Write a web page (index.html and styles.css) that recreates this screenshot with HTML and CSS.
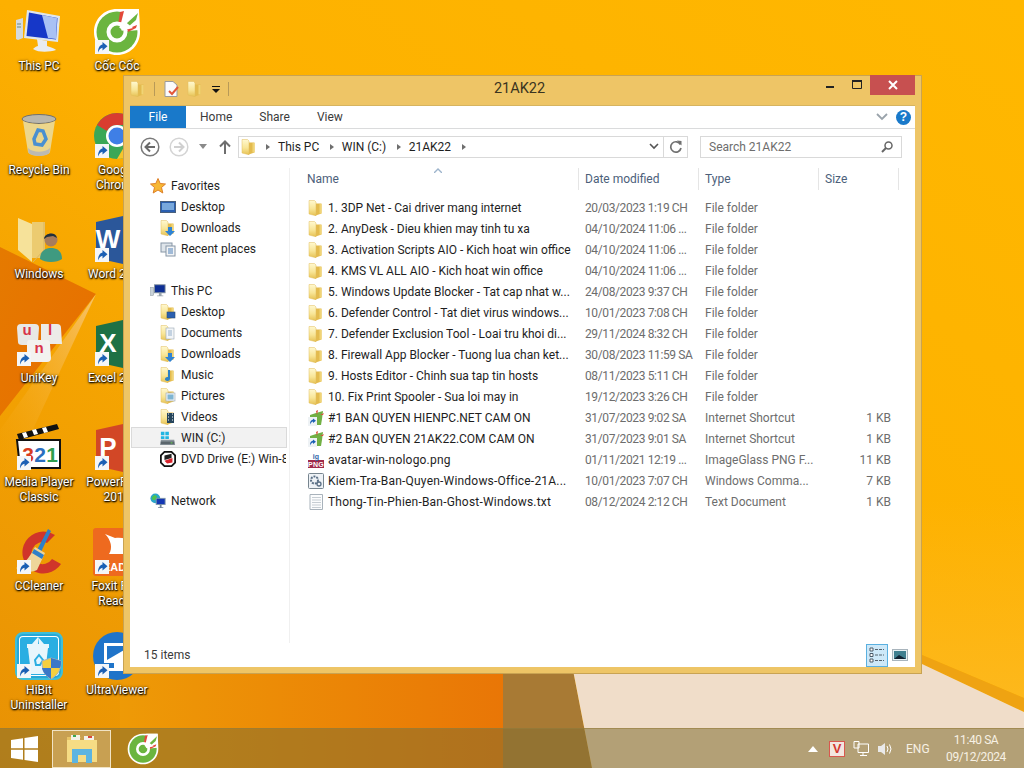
FILE: index.html
```html
<!DOCTYPE html>
<html lang="en">
<head>
<meta charset="utf-8">
<title>21AK22</title>
<link rel="stylesheet" href="styles.css">
</head>
<body>
<svg class="defs" width="0" height="0" aria-hidden="true">
  <defs>
    <linearGradient id="fg" x1="0" y1="0" x2="0" y2="1"><stop offset="0" stop-color="#fff8cf"/><stop offset=".55" stop-color="#f8e596"/><stop offset="1" stop-color="#e6c152"/></linearGradient>
    <symbol id="folder" viewBox="0 0 16 16">
      <path d="M7 3.500H13.500V13.500L7 15.800Z" fill="#e3bb4e"/>
      <path d="M1 .5H6.500L8 2V15.800L1 14Z" fill="url(#fg)" stroke="#e0bd5c" stroke-width=".5"/>
      <path d="M11.500 4H13.500V13.500H11.500Z" fill="#f0d476"/>
    </symbol>
    <symbol id="arrow" viewBox="0 0 14 14">
      <rect width="14" height="14" fill="#f4f6f8"/>
      <path d="M3 12.500C3 7.500 5 5 7.500 4.500V2L12.500 6.200L7.500 10.500V7.800C5.800 8 4.200 9.500 3 12.500Z" fill="#1a5fb4"/>
    </symbol>
    <symbol id="coccoc" viewBox="0 0 48 48">
      <path d="M24 1C11 1 1 11 1 24S11 47 24 47S47 37 47 24C47 15 46 6 46 1Z" fill="#fff"/>
      <circle cx="24" cy="24" r="20.500" fill="#6bb53f"/>
      <path d="M24 24L29 1H46V22Z" fill="#fff"/>
      <path d="M27 4L31 3L28 15L25.500 14Z" fill="#e2483a"/>
      <path d="M33 16L45 5L43 12L35 19Z" fill="#6bb53f"/>
      <path d="M34 21L44 17L43 20L35 24Z" fill="#e2483a"/>
      <circle cx="24" cy="24" r="8.500" fill="#6bb53f" stroke="#fff" stroke-width="4"/>
      <path d="M24 24L30 12L40 20Z" fill="#fff"/>
      <circle cx="24" cy="24" r="5" fill="#6bb53f"/>
    </symbol>
    <symbol id="pc" viewBox="0 0 48 48">
      <path d="M1 12L8 10V30L3 32L1 31Z" fill="#d4dadd"/>
      <path d="M2 16H6M2 19H6" stroke="#6e8a7c"/>
      <path d="M12 2L45 8L43 34L9 30Z" fill="#dfe6ee"/>
      <path d="M14 4.500L42.500 10L41 31.500L11.500 28Z" fill="#1637c8"/>
      <path d="M27 7L42 10L41 31L33 30Z" fill="#a9c1f4"/>
      <path d="M22 31L32 33V38C36 39 40 41 41 42C35 44 24 45 18 41C20 39 22 38 23 38Z" fill="#e9ecef"/>
    </symbol>
    <symbol id="bin" viewBox="0 0 48 48">
      <ellipse cx="24" cy="7" rx="17" ry="4.500" fill="#b9b7ae" stroke="#70706c"/>
      <path d="M8 9L13 40C16 45 32 45 35 40L40 9C32 13 16 13 8 9Z" fill="#ecd68c"/>
      <path d="M13 36C18 41 30 41 35 36L34.500 41C31 45 17 45 13.500 41Z" fill="#bcbab2"/>
      <path d="M19 27L23 18L28 19L31 27L27 33L20 32Z" fill="none" stroke="#4a90d0" stroke-width="3.500"/>
    </symbol>
    <symbol id="chrome" viewBox="0 0 48 48">
      <circle cx="24" cy="24" r="23" fill="#3aa757"/>
      <path d="M24 1A23 23 0 0 1 44 13H24A11 11 0 0 0 14 19L4 13A23 23 0 0 1 24 1Z" fill="#d93c30"/>
      <path d="M44 13A23 23 0 0 1 24 47L34 30A11 11 0 0 0 34 19Z" fill="#f7c52b"/>
      <circle cx="24" cy="24" r="11" fill="#fff"/>
      <circle cx="24" cy="24" r="8.500" fill="#3f7fe6"/>
    </symbol>
    <symbol id="userfolder" viewBox="0 0 48 48">
      <path d="M3 2L17 8L17 46L3 34Z" fill="#f6e29a"/>
      <path d="M17 6H30V42H17Z" fill="#eccb70"/>
      <path d="M29 6V34L18 46" fill="none" stroke="#d9b560"/>
      <circle cx="36" cy="24" r="6.500" fill="#a87c5c"/>
      <path d="M29 23C29 17 41 15 42 22L38 20L32 21Z" fill="#24303a"/>
      <path d="M25 43C25 34 32 32 36 32C42 32 47 35 47 43C42 47 30 47 25 43Z" fill="#3f9a80"/>
    </symbol>
    <symbol id="word" viewBox="0 0 48 48">
      <path d="M3 6L30 0V48L3 42Z" fill="#2b579a"/>
      <text x="15" y="32" class="svgbig" text-anchor="middle">W</text>
    </symbol>
    <symbol id="excel" viewBox="0 0 48 48">
      <path d="M3 6L30 0V48L3 42Z" fill="#1e7145"/>
      <text x="15" y="32" class="svgbig" text-anchor="middle">X</text>
    </symbol>
    <symbol id="ppt" viewBox="0 0 48 48">
      <path d="M3 6L30 0V48L3 42Z" fill="#d24726"/>
      <text x="15" y="32" class="svgbig" text-anchor="middle">P</text>
    </symbol>
    <symbol id="unikey" viewBox="0 0 48 48">
      <path d="M2 8Q2 4 6 4H20Q24 4 24 8L23 22Q23 25 19 25H7Q3 25 3 22Z" fill="#e8e8e6"/>
      <path d="M26 4H42Q46 4 46 8L47 24H26Z" fill="#ecebe8"/>
      <path d="M14 20H32Q35 20 35 24L36 38Q36 42 32 42H16Q12 42 12 38L12 24Q12 20 14 20Z" fill="#f3f2ef"/>
      <text x="12" y="15" class="svgkey" text-anchor="middle">u</text>
      <text x="35" y="15" class="svgkey" text-anchor="middle">l</text>
      <text x="24" y="33" class="svgkey" text-anchor="middle">n</text>
    </symbol>
    <symbol id="mpc" viewBox="0 0 48 48">
      <path d="M2 10L42 0L44 5L4 16Z" fill="#111"/>
      <path d="M7 9L11 8L13 13L9 14ZM17 6L21 5L23 10L19 11ZM27 4L31 3L33 8L29 9Z" fill="#fff"/>
      <path d="M2 16H45V44H5Z" fill="#fff" stroke="#111" stroke-width="2"/>
      <text x="13" y="38" class="svgnum3" text-anchor="middle">3</text>
      <text x="25" y="38" class="svgnum2" text-anchor="middle">2</text>
      <text x="37" y="38" class="svgnum1" text-anchor="middle">1</text>
    </symbol>
    <symbol id="ccleaner" viewBox="0 0 48 48">
      <path d="M40 7A21 21 0 1 0 46 36L37 31A11 11 0 1 1 32 15Z" fill="#d0352a"/>
      <path d="M33 1L36 3L26 24L22 22Z" fill="#2f7fc8"/>
      <path d="M20 19L30 25L22 42C16 45 6 44 1 40C9 37 14 30 20 19Z" fill="#eed59a"/>
      <path d="M19 21L29 27L27 31L17 25Z" fill="#2f7fc8"/>
    </symbol>
    <symbol id="foxit" viewBox="0 0 48 48">
      <rect width="48" height="48" rx="3" fill="#ee6a1f"/>
      <path d="M12 6L22 10C34 8 42 16 44 26H16C20 20 18 12 12 6Z" fill="#fff"/>
      <text x="2" y="43" class="svgfox">READER</text>
    </symbol>
    <symbol id="hibit" viewBox="0 0 48 48">
      <rect x="1" y="1" width="46" height="46" rx="7" fill="#26a7d8" stroke="#3fbfd8" stroke-width="2"/>
      <rect x="4" y="4" width="40" height="40" rx="4" fill="#fff"/>
      <rect x="5" y="5" width="38" height="38" rx="3" fill="#2aaee2"/>
      <path d="M13 16H33L30 42H16Z" fill="#e8f6fc"/>
      <path d="M12 12H34V16H12ZM17 12L23 5L24 12ZM29 12L23 5V12Z" fill="#e8f6fc"/>
      <path d="M20 28L24 23L28 28L25 33H21Z" fill="none" stroke="#2aaee2" stroke-width="2"/>
      <path d="M36 26L46 29C46 38 43 43 36 47C29 43 27 38 27 29Z" fill="#f4cf3e" stroke="#aab3bb"/>
      <path d="M36 26L46 29C46 32 46 34 45 36H36ZM36 36V47C30 43 28 40 27 36Z" fill="#3a78c8"/>
    </symbol>
    <symbol id="ultra" viewBox="0 0 48 48">
      <circle cx="24" cy="24" r="24" fill="#1f74c9"/>
      <path d="M11 11H41V31H11Z" fill="#fff"/>
      <path d="M14 14H38L14 28Z" fill="#1f74c9"/>
      <path d="M21 31H31V36H38V39H14V36H21Z" fill="#fff"/>
    </symbol>
    <symbol id="star" viewBox="0 0 16 16">
      <path d="M8 .500L10.200 5.500L15.500 6L11.500 9.500L12.800 15L8 12L3.200 15L4.500 9.500L.500 6L5.800 5.500Z" fill="#f7b733" stroke="#dd7f28"/>
    </symbol>
    <symbol id="desktopic" viewBox="0 0 16 16">
      <rect x=".5" y="2.500" width="15" height="11" fill="#2a5fb0" stroke="#49607d"/>
      <rect x="2" y="4" width="12" height="7" fill="#78a8dc"/>
    </symbol>
    <symbol id="downloads" viewBox="0 0 16 16">
      <use href="#folder"/>
      <path d="M8 7H12V11H15L10 16L5 11H8Z" fill="#2f83d4"/>
    </symbol>
    <symbol id="recent" viewBox="0 0 16 16">
      <rect x="1" y="2" width="11" height="9" fill="#dfe5ea" stroke="#8695a5"/>
      <rect x="6" y="5" width="9" height="10" fill="#f2f4f6" stroke="#8695a5"/>
      <path d="M8 8H13M8 10H13M8 12H13" stroke="#4f80b8"/>
    </symbol>
    <symbol id="thispc" viewBox="0 0 18 16">
      <rect x="0" y="4" width="4" height="9" fill="#c9d2d8" stroke="#7c8890" stroke-width=".5"/>
      <rect x="5" y="1" width="12" height="9" fill="#0e2f94" stroke="#85939e"/>
      <path d="M10 10H13V13H15V14H8V13H10Z" fill="#9aa5ad"/>
    </symbol>
    <symbol id="f-desktop" viewBox="0 0 16 16">
      <use href="#folder"/>
      <rect x="7" y="8" width="8" height="6" fill="#2a5fb0" stroke="#2d4d75" stroke-width=".6"/>
    </symbol>
    <symbol id="f-docs" viewBox="0 0 16 16">
      <use href="#folder"/>
      <rect x="6" y="3" width="8" height="11" fill="#f2f5f8" stroke="#9aa7b2" stroke-width=".6"/>
      <path d="M8 6H12M8 8H12M8 10H12" stroke="#6f93b8" stroke-width=".7"/>
    </symbol>
    <symbol id="f-music" viewBox="0 0 16 16">
      <use href="#folder"/>
      <path d="M10 3V12A2.500 2 0 1 1 8 10V3Z" fill="#2f83c4"/>
    </symbol>
    <symbol id="f-pics" viewBox="0 0 16 16">
      <use href="#folder"/>
      <rect x="6" y="5" width="9" height="8" fill="#eef3f6" stroke="#9aa7b2" stroke-width=".6"/>
      <rect x="7.500" y="6.500" width="6" height="5" fill="#7fb5d2"/>
    </symbol>
    <symbol id="f-videos" viewBox="0 0 16 16">
      <use href="#folder"/>
      <rect x="7" y="4" width="7" height="10" fill="#26455c"/>
      <path d="M8 5H9M8 8H9M8 11H9M12 5H13M12 8H13M12 11H13" stroke="#fff"/>
    </symbol>
    <symbol id="drive" viewBox="0 0 18 18">
      <path d="M1 2H5V6H1ZM6 2H10V6H6ZM1 7H5V10H1ZM6 7H10V10H6Z" fill="#21b5e2"/>
      <path d="M1 11H16L17 17H0Z" fill="#8b969d"/>
      <rect x="1" y="13" width="15" height="3" fill="#5b666d"/>
      <rect x="12" y="14" width="2" height="1" fill="#69e04b"/>
    </symbol>
    <symbol id="dvd" viewBox="0 0 18 18">
      <path d="M5 1H13L17 5V13L13 17H5L1 13V5Z" fill="#fff" stroke="#111" stroke-width="2"/>
      <path d="M5 5L13 3V8L5 10Z" fill="#222"/>
      <path d="M5 11L14 8V13L8 14Z" fill="#d7242d"/>
    </symbol>
    <symbol id="network" viewBox="0 0 18 18">
      <circle cx="6" cy="6" r="5.500" fill="#2aa6c8"/>
      <path d="M2 5L5 2L8 4L6 8L3 8Z" fill="#4ec34e"/>
      <rect x="7" y="6" width="10" height="7" fill="#1437b4" stroke="#7f95a8"/>
      <path d="M11 13H13V16H15V17H9V16H11Z" fill="#6f8498"/>
    </symbol>
    <symbol id="link" viewBox="0 0 16 16">
      <path d="M2 5L8 3L15 1L14 9L13 15H2Z" fill="#72b044"/>
      <path d="M8 1L10 0L9 5ZM12 5L16 3L15 5Z" fill="#df4b3a"/>
      <rect x="0" y="7" width="9" height="9" fill="#eef2f5"/>
      <path d="M2 14.500C2 11 3.500 10 5 9.800V8.500L8 10.800L5 13V11.600C3.800 11.800 2.800 12.800 2 14.500Z" fill="#1a5fb4"/>
    </symbol>
    <symbol id="png" viewBox="0 0 16 16">
      <rect x="0" y="8" width="16" height="8" fill="#a02a4a"/>
      <text x="8" y="6.500" class="svgig" text-anchor="middle">ig</text>
      <text x="8" y="15" class="svgpng" text-anchor="middle">PNG</text>
    </symbol>
    <symbol id="cmd" viewBox="0 0 16 16">
      <rect x=".5" y=".5" width="15" height="15" rx="1" fill="#eef2f6" stroke="#77858f"/>
      <circle cx="6.500" cy="7" r="3.500" fill="none" stroke="#5a6f85" stroke-width="2" stroke-dasharray="2 1"/>
      <circle cx="11" cy="11" r="2" fill="none" stroke="#5a6f85" stroke-width="1.300"/>
    </symbol>
    <symbol id="txt" viewBox="0 0 16 16">
      <path d="M2 .5H14.500V15.500H2Z" fill="#fbfcfd" stroke="#a8b2bb"/>
      <path d="M4 3.500H13M4 6H13M4 8.500H13M4 11H13M4 13.500H13" stroke="#c6cdd3"/>
    </symbol>
  </defs>
</svg>

<div class="screen">
  <svg class="wallpaper" viewBox="0 0 1024 768" aria-hidden="true">
    <defs>
      <linearGradient id="wb" x1="1" y1="0" x2="0" y2="1"><stop offset="0" stop-color="#ffb800"/><stop offset=".5" stop-color="#fdb000"/><stop offset="1" stop-color="#e89104"/></linearGradient>
      <linearGradient id="wo" x1="0" y1="0" x2="1" y2="0"><stop offset="0" stop-color="#ee9a06"/><stop offset="1" stop-color="#e97606"/></linearGradient>
      <linearGradient id="wd" x1="0" y1="0" x2="1" y2="1"><stop offset="0" stop-color="#e57a00"/><stop offset="1" stop-color="#e86e00"/></linearGradient>
      <linearGradient id="ws" x1="1" y1="0" x2="0" y2="1"><stop offset="0" stop-color="#f7c36c"/><stop offset="1" stop-color="#f5a200" stop-opacity="0"/></linearGradient>
      <linearGradient id="wy" x1="0" y1="0" x2="0" y2="1"><stop offset="0" stop-color="#fdb81c" stop-opacity="0"/><stop offset="1" stop-color="#fdb81c"/></linearGradient>
    </defs>
    <rect width="1024" height="768" fill="url(#wb)"/>
    <path d="M0 247L96 294L0 416Z" fill="url(#wd)"/>
    <path d="M96 294L0 430V500Z" fill="url(#ws)"/>
    <rect x="120" y="670" width="384" height="98" fill="url(#wo)"/>
    <path d="M503 670H573L592 768H503Z" fill="#a87a34"/>
    <path d="M922 500H1024V698L922 655Z" fill="url(#wy)"/>
    <path d="M922 655L1024 698V712L922 664Z" fill="#efa312"/>
    <path d="M573 670H922V664L1024 712V768H592Z" fill="#f0ddc9"/>
  </svg>

  <main class="desktop">
    <div class="dicon"><span class="dglyph"><svg class="big"><use href="#pc"/></svg></span><span class="dlabel">This PC</span></div>
    <div class="dicon"><span class="dglyph"><svg class="big"><use href="#bin"/></svg></span><span class="dlabel">Recycle Bin</span></div>
    <div class="dicon"><span class="dglyph"><svg class="big"><use href="#userfolder"/></svg></span><span class="dlabel">Windows</span></div>
    <div class="dicon"><span class="dglyph"><svg class="big"><use href="#unikey"/></svg><svg class="badge"><use href="#arrow"/></svg></span><span class="dlabel">UniKey</span></div>
    <div class="dicon"><span class="dglyph"><svg class="big"><use href="#mpc"/></svg><svg class="badge"><use href="#arrow"/></svg></span><span class="dlabel">Media Player<br>Classic</span></div>
    <div class="dicon"><span class="dglyph"><svg class="big"><use href="#ccleaner"/></svg><svg class="badge"><use href="#arrow"/></svg></span><span class="dlabel">CCleaner</span></div>
    <div class="dicon"><span class="dglyph"><svg class="big"><use href="#hibit"/></svg><svg class="badge"><use href="#arrow"/></svg></span><span class="dlabel">HiBit<br>Uninstaller</span></div>
    <div class="dicon"><span class="dglyph"><svg class="big"><use href="#coccoc"/></svg><svg class="badge"><use href="#arrow"/></svg></span><span class="dlabel">Cốc Cốc</span></div>
    <div class="dicon"><span class="dglyph"><svg class="big"><use href="#chrome"/></svg><svg class="badge"><use href="#arrow"/></svg></span><span class="dlabel">Google<br>Chrome</span></div>
    <div class="dicon"><span class="dglyph"><svg class="big"><use href="#word"/></svg><svg class="badge"><use href="#arrow"/></svg></span><span class="dlabel">Word 2016</span></div>
    <div class="dicon"><span class="dglyph"><svg class="big"><use href="#excel"/></svg><svg class="badge"><use href="#arrow"/></svg></span><span class="dlabel">Excel 2016</span></div>
    <div class="dicon"><span class="dglyph"><svg class="big"><use href="#ppt"/></svg><svg class="badge"><use href="#arrow"/></svg></span><span class="dlabel">PowerPoint<br>2016</span></div>
    <div class="dicon"><span class="dglyph"><svg class="big"><use href="#foxit"/></svg><svg class="badge"><use href="#arrow"/></svg></span><span class="dlabel">Foxit PDF<br>Reader</span></div>
    <div class="dicon"><span class="dglyph"><svg class="big"><use href="#ultra"/></svg><svg class="badge"><use href="#arrow"/></svg></span><span class="dlabel">UltraViewer</span></div>
  </main>

  <section class="window">
    <header class="titlebar">
      <div class="qat">
        <svg class="ic"><use href="#folder"/></svg>
        <span class="qsep"></span>
        <svg class="ic" viewBox="0 0 16 16"><path d="M2 .5H10L14 4V15.500H2Z" fill="#fbfbfb" stroke="#9b9b9b"/><path d="M6 10L9 13L15 6" fill="none" stroke="#e2573a" stroke-width="2"/></svg>
        <svg class="ic"><use href="#folder"/></svg>
        <svg class="qdrop" viewBox="0 0 8 8"><path d="M0 1H8V2H0ZM0 4H8L4 8Z" fill="#111"/></svg>
        <span class="qsep"></span>
      </div>
      <h1 class="wtitle">21AK22</h1>
      <div class="controls">
        <span class="cbtn"><svg class="cglyph" viewBox="0 0 10 10"><rect x="1" y="6" width="8" height="2" fill="#222"/></svg></span>
        <span class="cbtn"><svg class="cglyph" viewBox="0 0 10 10"><path d="M.5 .5H9.500V8.500H.5Z" fill="none" stroke="#222"/><rect x="0" y="0" width="10" height="2" fill="#222"/></svg></span>
        <span class="cclose"><svg class="cglyph" viewBox="0 0 10 10"><path d="M1 1L9 9M9 1L1 9" stroke="#fff" stroke-width="2"/></svg></span>
      </div>
    </header>

    <div class="client">
      <nav class="ribbon">
        <span class="tab-file">File</span>
        <span class="tab">Home</span>
        <span class="tab">Share</span>
        <span class="tab">View</span>
        <span class="ribbon-right">
          <svg class="chev" viewBox="0 0 12 8"><path d="M1 1L6 6L11 1" fill="none" stroke="#9aa3ab" stroke-width="1.800"/></svg>
          <span class="help">?</span>
        </span>
      </nav>

      <div class="toolbar">
        <svg class="navbtn" viewBox="0 0 20 20"><circle cx="10" cy="10" r="8.800" fill="#fff" stroke="#7a7a7a" stroke-width="1.500"/><path d="M15 10H6M10 5.500L5.500 10L10 14.500" fill="none" stroke="#6a6a6a" stroke-width="2"/></svg>
        <svg class="navbtn navgap" viewBox="0 0 20 20"><circle cx="10" cy="10" r="8.800" fill="#fff" stroke="#d4d4d4" stroke-width="1.500"/><path d="M5 10H14M10 5.500L14.500 10L10 14.500" fill="none" stroke="#d0d0d0" stroke-width="2"/></svg>
        <svg class="navdown" viewBox="0 0 8 5"><path d="M0 0H8L4 5Z" fill="#8a8a8a"/></svg>
        <svg class="navup" viewBox="0 0 12 14"><path d="M6 14V2M1 6.500L6 1.500L11 6.500" fill="none" stroke="#6e6e6e" stroke-width="2"/></svg>
        <div class="address">
          <svg class="ic addr-folder"><use href="#folder"/></svg>
          <span class="crumb-arrow"></span><span class="crumb">This PC</span>
          <span class="crumb-arrow"></span><span class="crumb">WIN (C:)</span>
          <span class="crumb-arrow"></span><span class="crumb">21AK22</span>
          <span class="crumb-arrow"></span>
          <span class="addr-end">
            <svg class="addr-chev" viewBox="0 0 10 7"><path d="M1 1L5 5L9 1" fill="none" stroke="#555" stroke-width="1.600"/></svg>
            <span class="addr-refresh"><svg class="refresh" viewBox="0 0 14 14"><path d="M11.500 4.500A5.200 5.200 0 1 0 12 8" fill="none" stroke="#707070" stroke-width="1.700"/><path d="M8 .5L12.500 1V5.500Z" fill="#707070"/></svg></span>
          </span>
        </div>
        <div class="search">
          <span>Search 21AK22</span>
          <svg class="lens" viewBox="0 0 12 12"><circle cx="7.500" cy="4.500" r="3.500" fill="none" stroke="#666" stroke-width="1.500"/><path d="M5 7L1 11" stroke="#666" stroke-width="2"/></svg>
        </div>
      </div>

      <div class="panes">
        <aside class="navpane">
          <div class="navgroup">
            <div class="nitem top"><svg class="ic"><use href="#star"/></svg>Favorites</div>
            <div class="nitem"><svg class="ic"><use href="#desktopic"/></svg>Desktop</div>
            <div class="nitem"><svg class="ic"><use href="#downloads"/></svg>Downloads</div>
            <div class="nitem"><svg class="ic"><use href="#recent"/></svg>Recent places</div>
          </div>
          <div class="navgroup">
            <div class="nitem top"><svg class="ic"><use href="#thispc"/></svg>This PC</div>
            <div class="nitem"><svg class="ic"><use href="#f-desktop"/></svg>Desktop</div>
            <div class="nitem"><svg class="ic"><use href="#f-docs"/></svg>Documents</div>
            <div class="nitem"><svg class="ic"><use href="#downloads"/></svg>Downloads</div>
            <div class="nitem"><svg class="ic"><use href="#f-music"/></svg>Music</div>
            <div class="nitem"><svg class="ic"><use href="#f-pics"/></svg>Pictures</div>
            <div class="nitem"><svg class="ic"><use href="#f-videos"/></svg>Videos</div>
            <div class="nitem selected"><svg class="ic"><use href="#drive"/></svg>WIN (C:)</div>
            <div class="nitem"><svg class="ic"><use href="#dvd"/></svg>DVD Drive (E:) Win-8</div>
          </div>
          <div class="navgroup">
            <div class="nitem top"><svg class="ic"><use href="#network"/></svg>Network</div>
          </div>
        </aside>

        <div class="filepane">
          <div class="headers">
            <span class="h h-name">Name<svg class="sort" viewBox="0 0 8 5"><path d="M0 5L4 1L8 5" fill="none" stroke="#9db4cc" stroke-width="1.400"/></svg></span>
            <span class="h">Date modified</span>
            <span class="h">Type</span>
            <span class="h">Size</span>
          </div>
          <div class="rows">
            <div class="row"><span class="c-name"><svg class="ic"><use href="#folder"/></svg>1. 3DP Net - Cai driver mang internet</span><span class="c-date">20/03/2023 1:19 CH</span><span class="c">File folder</span><span class="c-size"></span></div>
            <div class="row"><span class="c-name"><svg class="ic"><use href="#folder"/></svg>2. AnyDesk - Dieu khien may tinh tu xa</span><span class="c-date">04/10/2024 11:06 ...</span><span class="c">File folder</span><span class="c-size"></span></div>
            <div class="row"><span class="c-name"><svg class="ic"><use href="#folder"/></svg>3. Activation Scripts AIO - Kich hoat win office</span><span class="c-date">04/10/2024 11:06 ...</span><span class="c">File folder</span><span class="c-size"></span></div>
            <div class="row"><span class="c-name"><svg class="ic"><use href="#folder"/></svg>4. KMS VL ALL AIO - Kich hoat win office</span><span class="c-date">04/10/2024 11:06 ...</span><span class="c">File folder</span><span class="c-size"></span></div>
            <div class="row"><span class="c-name"><svg class="ic"><use href="#folder"/></svg>5. Windows Update Blocker - Tat cap nhat w...</span><span class="c-date">24/08/2023 9:37 CH</span><span class="c">File folder</span><span class="c-size"></span></div>
            <div class="row"><span class="c-name"><svg class="ic"><use href="#folder"/></svg>6. Defender Control - Tat diet virus windows...</span><span class="c-date">10/01/2023 7:08 CH</span><span class="c">File folder</span><span class="c-size"></span></div>
            <div class="row"><span class="c-name"><svg class="ic"><use href="#folder"/></svg>7. Defender Exclusion Tool - Loai tru khoi di...</span><span class="c-date">29/11/2024 8:32 CH</span><span class="c">File folder</span><span class="c-size"></span></div>
            <div class="row"><span class="c-name"><svg class="ic"><use href="#folder"/></svg>8. Firewall App Blocker - Tuong lua chan ket...</span><span class="c-date">30/08/2023 11:59 SA</span><span class="c">File folder</span><span class="c-size"></span></div>
            <div class="row"><span class="c-name"><svg class="ic"><use href="#folder"/></svg>9. Hosts Editor - Chinh sua tap tin hosts</span><span class="c-date">08/11/2023 5:11 CH</span><span class="c">File folder</span><span class="c-size"></span></div>
            <div class="row"><span class="c-name"><svg class="ic"><use href="#folder"/></svg>10. Fix Print Spooler - Sua loi may in</span><span class="c-date">19/12/2023 3:26 CH</span><span class="c">File folder</span><span class="c-size"></span></div>
            <div class="row"><span class="c-name"><svg class="ic"><use href="#link"/></svg>#1 BAN QUYEN HIENPC.NET CAM ON</span><span class="c-date">31/07/2023 9:02 SA</span><span class="c">Internet Shortcut</span><span class="c-size">1 KB</span></div>
            <div class="row"><span class="c-name"><svg class="ic"><use href="#link"/></svg>#2 BAN QUYEN 21AK22.COM CAM ON</span><span class="c-date">31/07/2023 9:01 SA</span><span class="c">Internet Shortcut</span><span class="c-size">1 KB</span></div>
            <div class="row"><span class="c-name wide"><svg class="ic"><use href="#png"/></svg>avatar-win-nologo.png</span><span class="c-date">01/11/2021 12:19 ...</span><span class="c">ImageGlass PNG F...</span><span class="c-size">11 KB</span></div>
            <div class="row"><span class="c-name wide"><svg class="ic"><use href="#cmd"/></svg>Kiem-Tra-Ban-Quyen-Windows-Office-21A...</span><span class="c-date">10/01/2023 7:07 CH</span><span class="c">Windows Comma...</span><span class="c-size">7 KB</span></div>
            <div class="row"><span class="c-name wide"><svg class="ic"><use href="#txt"/></svg>Thong-Tin-Phien-Ban-Ghost-Windows.txt</span><span class="c-date">08/12/2024 2:12 CH</span><span class="c">Text Document</span><span class="c-size">1 KB</span></div>
          </div>
        </div>
      </div>

      <footer class="status">
        <span>15 items</span>
        <span class="views">
          <span class="view active"><svg class="vglyph" viewBox="0 0 16 16"><path d="M1 1H4V4H1ZM1 6.500H4V9.500H1ZM1 12H4V15H1Z" fill="#fff" stroke="#4a5a68"/><path d="M6 2.500H15M6 8H15M6 13.500H15" stroke="#55636f" stroke-dasharray="3 1"/></svg></span>
          <span class="view second"><svg class="vglyph" viewBox="0 0 16 16"><rect x=".5" y="2.500" width="15" height="11" fill="#e8f0f4" stroke="#a8b4bc"/><rect x="2" y="4" width="12" height="8" fill="#3f7f90"/><path d="M2 12L7 8L14 12Z" fill="#123"/></svg></span>
        </span>
      </footer>
    </div>
  </section>

  <footer class="taskbar">
    <svg class="start" viewBox="0 0 27 26"><path d="M0 4L12 2.200V12.300H0ZM13.500 2L27 0V12.300H13.500ZM0 13.700H12V23.800L0 22ZM13.500 13.700H27V26L13.500 24Z" fill="#fff"/></svg>
    <span class="tb-active">
      <svg class="tb-explorer" viewBox="0 0 32 32"><path d="M1 7H31V29H1Z" fill="#f6dc84"/><path d="M1 7H13L15 4H1Z" fill="#e8c466"/><path d="M5 2H14V7H5Z" fill="#f4f2ea"/><path d="M7 2H10V4H7Z" fill="#3aa655"/><path d="M18 3H28V7H18Z" fill="#f4f2ea"/><path d="M22 3H26V5H22Z" fill="#d8483a"/><path d="M6 16H26V30H20V22H12V30H6Z" fill="#5cb4e0"/></svg>
    </span>
    <svg class="tb-coccoc"><use href="#coccoc"/></svg>
    <div class="tray">
      <svg class="caret" viewBox="0 0 10 6"><path d="M0 6L5 0L10 6Z" fill="#fff"/></svg>
      <span class="vkey">V</span>
      <svg class="tr-ic" viewBox="0 0 16 16"><path d="M1 .5H6V7H1ZM5 3H15.500V11.500H5ZM7 14.500H14M10 11.500V14.500" fill="none" stroke="#fff"/></svg>
      <svg class="tr-ic" viewBox="0 0 16 16"><path d="M1 5H4L8 2V14L4 11H1Z" fill="#e9e9e9"/><path d="M10 5Q12 8 10 11M12.500 3.500Q15.500 8 12.500 12.500" fill="none" stroke="#fff"/></svg>
      <span class="lang">ENG</span>
      <span class="clock"><span>11:40 SA</span><span>09/12/2024</span></span>
    </div>
  </footer>
</div>
</body>
</html>
```

FILE: styles.css
```css
* { box-sizing: border-box; }
html, body { margin: 0; padding: 0; }
body { width: 1024px; height: 768px; overflow: hidden; font-family: Roboto, "Noto Sans", sans-serif; font-size: 12px; color: #1e1e1e; }
.defs { position: absolute; }
.svgbig { font: 700 26px "Liberation Sans", sans-serif; fill: #fff; }
.svgkey { font: 700 15px "Liberation Sans", sans-serif; fill: #d8344a; }
.svgnum3 { font: 700 21px "Liberation Sans", sans-serif; fill: #d93c20; }
.svgnum2 { font: 700 21px "Liberation Sans", sans-serif; fill: #2a6fc0; }
.svgnum1 { font: 700 21px "Liberation Sans", sans-serif; fill: #2e9e4f; }
.svgfox { font: 700 11px "Liberation Sans", sans-serif; fill: #fff; }
.svgig { font: 700 7px "Liberation Sans", sans-serif; fill: #3468a8; }
.svgpng { font: 700 7px "Liberation Sans", sans-serif; fill: #fff; }

.screen { position: relative; width: 1024px; height: 768px; overflow: hidden; display: flex; flex-direction: column; }
.wallpaper { position: absolute; left: 0; top: 0; width: 1024px; height: 768px; }

.desktop { position: relative; flex: none; height: 728px; display: grid; grid-auto-flow: column; grid-template-rows: repeat(7, 104px); grid-auto-columns: 78px; padding-top: 8px; }
.dicon { display: flex; flex-direction: column; align-items: center; }
.dglyph { position: relative; display: block; width: 48px; height: 48px; margin-bottom: 3px; }
.big { display: block; width: 48px; height: 48px; }
.badge { position: absolute; left: 2px; bottom: 2px; width: 14px; height: 14px; }
.dlabel { color: #fff; text-align: center; line-height: 15px; white-space: nowrap; text-shadow: 0 1px 2px #000, 1px 1px 1px rgba(0,0,0,.7), 0 0 3px rgba(0,0,0,.6); }

.window { position: absolute; left: 123px; top: 75px; width: 799px; height: 599px; display: flex; flex-direction: column; background: #eec566; border: 1px solid #c9a352; padding: 0 6px 6px; }
.titlebar { height: 29px; flex: none; display: flex; align-items: flex-start; }
.qat { display: flex; align-items: center; gap: 8px; height: 26px; width: 100px; flex: none; }
.qsep { width: 1px; height: 14px; background: #b89a58; }
.qdrop { width: 8px; height: 8px; margin-left: 1px; }
.ic { width: 16px; height: 16px; flex: none; display: block; }
.wtitle { flex: 1; margin: 3px 0 0; font-size: 14.500px; line-height: 20px; font-weight: 400; text-align: center; color: #3a3420; padding-right: 7px; }
.controls { display: flex; flex: none; height: 20px; margin-top: -1px; }
.cbtn { width: 27px; height: 20px; display: flex; align-items: center; justify-content: center; }
.cclose { width: 45px; height: 20px; background: #c75050; display: flex; align-items: center; justify-content: center; }
.cglyph { width: 10px; height: 10px; }

.client { flex: 1; min-height: 0; background: #fff; display: flex; flex-direction: column; border: 1px solid #d6b460; border-width: 1px 0 0; }
.ribbon { height: 23px; flex: none; display: flex; align-items: stretch; border-bottom: 1px solid #dadbdc; color: #3b3b3b; }
.tab-file { width: 56px; background: #1979ca; color: #fff; display: flex; align-items: center; justify-content: center; }
.tab { display: flex; align-items: center; padding: 0 13px 0 14px; }
.ribbon-right { margin-left: auto; display: flex; align-items: center; gap: 8px; padding-right: 4px; }
.chev { width: 12px; height: 8px; }
.help { width: 15px; height: 15px; border-radius: 50%; background: #1979ca; color: #fff; font: 700 12px/15px "Liberation Sans", sans-serif; text-align: center; }

.toolbar { height: 39px; flex: none; display: flex; align-items: center; padding: 0 12px 4px 10px; color: #1e1e1e; }
.navbtn { width: 20px; height: 20px; flex: none; }
.navgap { margin-left: 9px; }
.navdown { width: 8px; height: 5px; flex: none; margin-left: 10px; }
.navup { width: 12px; height: 14px; flex: none; margin-left: 12px; }
.address { width: 450px; height: 22px; flex: none; margin-left: 7px; border: 1px solid #d9d9d9; display: flex; align-items: center; padding-left: 2px; }
.addr-folder { margin-right: 7px; }
.crumb-arrow { width: 0; height: 0; flex: none; margin: 0 8px 0 2px; border-left: 4px solid #6e6e6e; border-top: 3.500px solid transparent; border-bottom: 3.500px solid transparent; }
.crumb { margin-right: 8.500px; white-space: nowrap; }
.addr-end { margin-left: auto; display: flex; align-items: center; height: 100%; }
.addr-chev { width: 10px; height: 7px; margin-right: 4px; }
.addr-refresh { width: 24px; height: 100%; border-left: 1px solid #d9d9d9; display: flex; align-items: center; justify-content: center; }
.refresh { width: 14px; height: 14px; }
.search { width: 202px; height: 22px; flex: none; margin-left: 12px; border: 1px solid #d9d9d9; display: flex; align-items: center; justify-content: space-between; padding: 0 8px; color: #6d6d6d; }
.lens { width: 12px; height: 12px; }

.panes { flex: 1; min-height: 0; display: flex; }
.navpane { width: 160px; flex: none; border-right: 1px solid #f0f0f0; padding: 7px 2px 0 1px; display: flex; flex-direction: column; gap: 21px; overflow: hidden; }
.nitem { height: 21px; display: flex; align-items: center; gap: 5px; padding-left: 28px; white-space: nowrap; overflow: hidden; border: 1px solid transparent; }
.nitem.top { padding-left: 18px; }
.nitem.selected { background: #f2f2f2; border-color: #dadada; }

.filepane { flex: 1; min-width: 0; display: flex; flex-direction: column; }
.headers { height: 22px; flex: none; display: grid; grid-template-columns: 289px 120px 120px 80px; color: #4c607a; }
.h { position: relative; display: flex; align-items: center; padding: 0 0 1px 6px; border-right: 1px solid #e5e5e5; }
.h-name { padding-left: 17px; }
.sort { position: absolute; left: 144px; top: 0; width: 8px; height: 5px; }
.rows { padding-top: 7px; }
.row { height: 21px; display: grid; grid-template-columns: 295px 120px 120px 66px; align-items: center; color: #6d6d6d; }
.c-name { display: flex; align-items: center; gap: 4px; padding-left: 18px; color: #1e1e1e; white-space: nowrap; }
.c-name.wide { letter-spacing: .2px; }
.c-date { white-space: nowrap; letter-spacing: -.38px; }
.c { white-space: nowrap; }
.c-size { text-align: right; }

.status { height: 24px; flex: none; display: flex; align-items: center; justify-content: space-between; padding: 0 6px 0 14px; color: #3b3b3b; }
.views { display: flex; align-items: center; gap: 3px; }
.view { width: 22px; height: 23px; display: flex; align-items: center; justify-content: center; }
.view.second { width: 18px; }
.view.active { background: #cde8f8; border: 1px solid #5ab0e0; }
.vglyph { width: 16px; height: 16px; }

.taskbar { position: relative; height: 40px; flex: none; display: flex; align-items: center; background: rgba(130,110,50,.55); border-top: 1px solid rgba(150,125,60,.6); }
.start { width: 27px; height: 26px; margin-left: 11px; flex: none; }
.tb-active { width: 59px; height: 38px; margin-left: 14px; flex: none; background: rgba(255,240,210,.3); border: 1px solid rgba(255,250,235,.75); display: flex; align-items: center; justify-content: center; }
.tb-explorer { width: 32px; height: 32px; }
.tb-coccoc { width: 32px; height: 32px; margin-left: 16px; flex: none; }
.tray { margin-left: auto; display: flex; align-items: center; color: #f7f1e4; }
.caret { width: 10px; height: 6px; margin-right: 11px; }
.vkey { width: 16px; height: 16px; background: #f3e6e0; border: 1px solid #d8584e; color: #d23a30; font: 700 13px/14px "Liberation Sans", sans-serif; text-align: center; margin-right: 8px; }
.tr-ic { width: 16px; height: 16px; margin-right: 8px; }
.lang { margin-left: 5px; width: 28px; }
.clock { width: 80px; display: flex; flex-direction: column; align-items: center; line-height: 17px; margin-top: 1px; margin-left: 2px; margin-right: 8px; letter-spacing: -.4px; }
```
